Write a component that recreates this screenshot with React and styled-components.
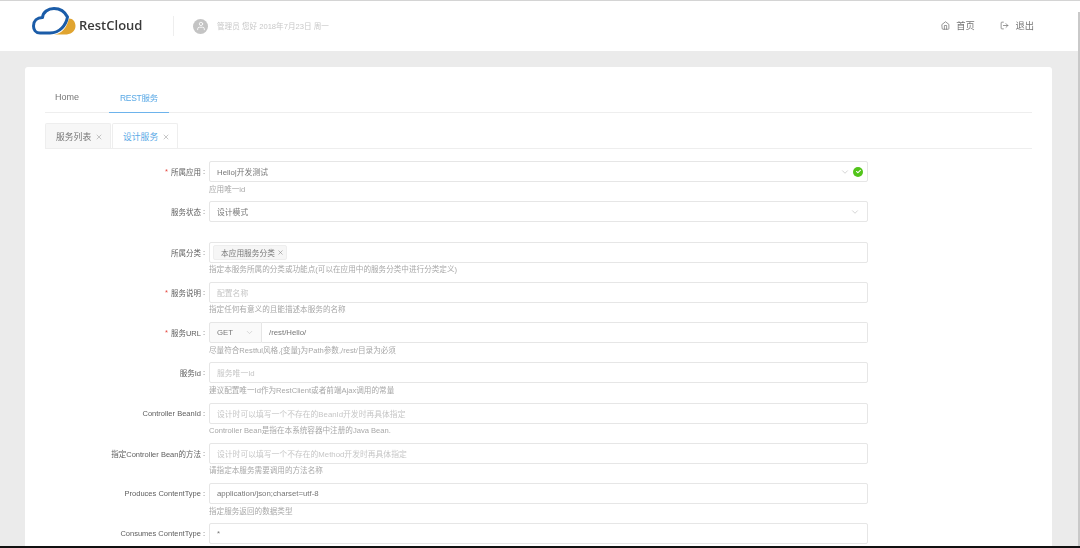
import React from "react";
import styled, { createGlobalStyle } from "styled-components";
import { FiHome, FiLogOut, FiUser, FiX, FiChevronDown } from "react-icons/fi";
import { FaCheck } from "react-icons/fa";

const GlobalStyle = createGlobalStyle`
  html, body {
    margin: 0;
    height: 100%;
    overflow: hidden;
    background: #ebebeb;
    font-family: "Liberation Sans", "Noto Sans CJK SC", sans-serif;
  }
  * { box-sizing: border-box; }
`;

const rows = [
  { label: "所属应用", required: true, kind: "select", value: "Hello|开发测试", help: "应用唯一id", valid: true },
  { label: "服务状态", kind: "select", value: "设计模式" },
  { label: "所属分类", kind: "tags", help: "指定本服务所属的分类或功能点(可以在应用中的服务分类中进行分类定义)" },
  { label: "服务说明", required: true, placeholder: "配置名称", help: "指定任何有意义的且能描述本服务的名称" },
  { label: "服务URL", required: true, kind: "url", value: "/rest/Hello/", help: "尽量符合Restful风格,{变量}为Path参数,/rest/目录为必须" },
  { label: "服务Id", placeholder: "服务唯一Id", help: "建议配置唯一Id作为RestClient或者前端Ajax调用的常量" },
  { label: "Controller BeanId", placeholder: "设计时可以填写一个不存在的BeanId开发时再具体指定", help: "Controller Bean是指在本系统容器中注册的Java Bean." },
  { label: "指定Controller Bean的方法", placeholder: "设计时可以填写一个不存在的Method开发时再具体指定", help: "请指定本服务需要调用的方法名称" },
  { label: "Produces ContentType", value: "application/json;charset=utf-8", help: "指定服务返回的数据类型" },
  { label: "Consumes ContentType", value: "*" },
];

const Logo = () => (
  <svg width="44" height="29" viewBox="0 0 44 29" fill="none">
    <path d="M22 27.5 C30 27 35 20 37 11.5 C41 11.5 43.5 15 43.5 19 C43.5 25 38 27.5 33 27.5 Z" fill="#e0a430" />
    <path
      d="M8 26 C3.5 26 1.5 22.5 1.5 19 C1.5 14 5 10.5 10.5 10.5 C11 5 16 1.5 22 1.5 C29 1.5 33 5 35.5 10 C34 18 28 26 18 26 Z"
      fill="#fff"
      stroke="#1b5ca8"
      strokeWidth="3"
      strokeLinejoin="round"
    />
  </svg>
);

const FormRow = ({ row }) => (
  <Row>
    <Label>
      {row.required && <Star>*</Star>}
      {row.label}
      <Colon>:</Colon>
    </Label>
    <Field>
      {row.kind === "url" ? (
        <UrlGroup>
          <MethodSelect>
            GET
            <FiChevronDown />
          </MethodSelect>
          <UrlInput>{row.value}</UrlInput>
        </UrlGroup>
      ) : (
        <Control>
          {row.kind === "tags" ? (
            <Tag>
              本应用服务分类
              <FiX />
            </Tag>
          ) : (
            <ControlText $muted={!row.value}>{row.value || row.placeholder}</ControlText>
          )}
          {row.kind === "select" && (
            <Arrows $valid={row.valid}>
              <FiChevronDown />
              {row.valid && (
                <ValidDot>
                  <FaCheck />
                </ValidDot>
              )}
            </Arrows>
          )}
        </Control>
      )}
      {row.help && <Help>{row.help}</Help>}
    </Field>
  </Row>
);

export default function App() {
  return (
    <Page>
      <GlobalStyle />
      <Header>
        <Brand>
          <Logo />
          <BrandName>RestCloud</BrandName>
        </Brand>
        <Divider />
        <Avatar>
          <FiUser />
        </Avatar>
        <Greeting>管理员 您好 2018年7月23日 周一</Greeting>
        <HeaderLinks>
          <HeaderLink>
            <FiHome />
            首页
          </HeaderLink>
          <HeaderLink>
            <FiLogOut />
            退出
          </HeaderLink>
        </HeaderLinks>
      </Header>
      <Card>
        <MainTabs>
          <MainTab>Home</MainTab>
          <MainTab $active>REST服务</MainTab>
        </MainTabs>
        <CardTabs>
          <CardTab>
            服务列表
            <FiX />
          </CardTab>
          <CardTab $active>
            设计服务
            <FiX />
          </CardTab>
        </CardTabs>
        <Form>
          {rows.map((row) => (
            <FormRow key={row.label} row={row} />
          ))}
        </Form>
      </Card>
      <ScrollEdge />
    </Page>
  );
}

const Page = styled.div`
  position: relative;
  height: 548px;
  overflow: hidden;
  border-top: 1px solid #d4d4d4;
  border-bottom: 2px solid #111;
  filter: blur(0.3px);
`;

const ScrollEdge = styled.div`
  position: absolute;
  top: 11px;
  right: 0;
  bottom: 0;
  width: 2px;
  background: #c9c9c9;
`;

const Header = styled.header`
  height: 50px;
  background: #fff;
  display: flex;
  align-items: center;
  padding: 0 32px;
`;

const Brand = styled.div`
  display: flex;
  align-items: center;
  gap: 3px;
  width: 141px;
  margin-top: -9px;
`;

const BrandName = styled.span`
  margin-top: 6px;
  font-family: "Open Sans", sans-serif;
  font-size: 13px;
  font-weight: 600;
  color: #3a3a3a;
`;

const Divider = styled.div`
  width: 1px;
  height: 20px;
  background: #eee;
  margin-right: 19px;
`;

const Avatar = styled.div`
  width: 15px;
  height: 15px;
  border-radius: 50%;
  background: #c4c4c4;
  color: #fff;
  display: flex;
  align-items: center;
  justify-content: center;
  font-size: 10px;
  margin-right: 9px;
`;

const Greeting = styled.span`
  font-size: 7.6px;
  color: #c8c8c8;
  margin-top: -1px;
`;

const HeaderLinks = styled.nav`
  margin-left: auto;
  display: flex;
  gap: 25px;
  padding-right: 14px;
  margin-top: -2px;
`;

const HeaderLink = styled.a`
  display: flex;
  align-items: center;
  gap: 6.5px;
  font-size: 9.3px;
  color: #777;
  svg {
    font-size: 9px;
  }
`;

const Card = styled.main`
  margin: 16px 28px 0 25px;
  height: 500px;
  background: #fff;
  border-radius: 3px;
  padding: 18px 20px 0;
`;

const MainTabs = styled.div`
  display: flex;
  border-bottom: 1px solid #eee;
  height: 28px;
`;

const MainTab = styled.div`
  height: 28px;
  padding: 0 ${(p) => (p.$active ? "11px" : "10px")} 4px;
  margin-right: ${(p) => (p.$active ? "0" : "20px")};
  display: flex;
  align-items: center;
  font-size: ${(p) => (p.$active ? "8.5px" : "9px")};
  letter-spacing: ${(p) => (p.$active ? "-0.3px" : "0")};
  color: ${(p) => (p.$active ? "#5aa9e6" : "#777")};
  border-bottom: ${(p) => (p.$active ? "1.5px solid #6db3ec" : "none")};
`;

const CardTabs = styled.div`
  display: flex;
  gap: 1px;
  margin-top: 10px;
  height: 26px;
  border-bottom: 1px solid #eee;
`;

const CardTab = styled.div`
  width: 66px;
  height: 25px;
  padding: 1px 0 0 10px;
  display: flex;
  align-items: center;
  gap: 4px;
  font-size: 8.8px;
  color: ${(p) => (p.$active ? "#5aa9e6" : "#777")};
  background: ${(p) => (p.$active ? "#fff" : "#f7f7f7")};
  border: 1px solid #eee;
  border-bottom: none;
  border-radius: 2px 2px 0 0;
  svg {
    font-size: 8px;
    color: #aaa;
  }
`;

const Form = styled.div`
  margin-top: 12px;
  display: flex;
  flex-direction: column;
`;

const Row = styled.div`
  height: 40.25px;
  display: flex;
  align-items: flex-start;
`;

const Label = styled.label`
  width: 164px;
  height: 21px;
  padding-right: 4px;
  display: flex;
  align-items: center;
  justify-content: flex-end;
  font-size: 7.5px;
  color: #606060;
  white-space: nowrap;
`;

const Colon = styled.span`
  margin-left: 2px;
`;

const Star = styled.span`
  color: #e5483f;
  margin-right: 3px;
`;

const Field = styled.div`
  width: 659px;
`;

const Control = styled.div`
  height: 21px;
  background: #fff;
  border: 1px solid #e6e6e6;
  border-radius: 2px;
  display: flex;
  align-items: center;
  padding: 0 7px;
`;

const ControlText = styled.span`
  font-size: 7.8px;
  color: ${(p) => (p.$muted ? "#c6c6c6" : "#777")};
`;

const Arrows = styled.span`
  margin-left: auto;
  display: flex;
  align-items: center;
  gap: 3px;
  color: #ccc;
  font-size: 10px;
  margin-right: ${(p) => (p.$valid ? "-3px" : "0")};
`;

const ValidDot = styled.span`
  width: 10px;
  height: 10px;
  border-radius: 50%;
  background: #52c41a;
  color: #fff;
  font-size: 5px;
  display: flex;
  align-items: center;
  justify-content: center;
`;

const Tag = styled.span`
  height: 15px;
  margin-left: -4px;
  padding: 0 2px 0 7px;
  display: flex;
  align-items: center;
  gap: 2px;
  font-size: 7.7px;
  color: #777;
  background: #f6f6f6;
  border: 1px solid #eee;
  border-radius: 2px;
  svg {
    font-size: 7px;
    color: #888;
  }
`;

const UrlGroup = styled.div`
  display: flex;
  height: 21px;
`;

const MethodSelect = styled.div`
  width: 53px;
  background: #fafafa;
  border: 1px solid #e6e6e6;
  border-radius: 2px 0 0 2px;
  display: flex;
  align-items: center;
  justify-content: space-between;
  padding: 0 7px;
  font-size: 7.8px;
  color: #777;
  svg {
    font-size: 9px;
    color: #ccc;
  }
`;

const UrlInput = styled.div`
  flex: 1;
  border: 1px solid #e6e6e6;
  border-left: none;
  border-radius: 0 2px 2px 0;
  display: flex;
  align-items: center;
  padding: 0 7px;
  font-size: 7.8px;
  color: #777;
`;

const Help = styled.div`
  margin-top: 1.5px;
  font-size: 7.6px;
  line-height: 12px;
  color: #a8a8a8;
  white-space: nowrap;
`;
